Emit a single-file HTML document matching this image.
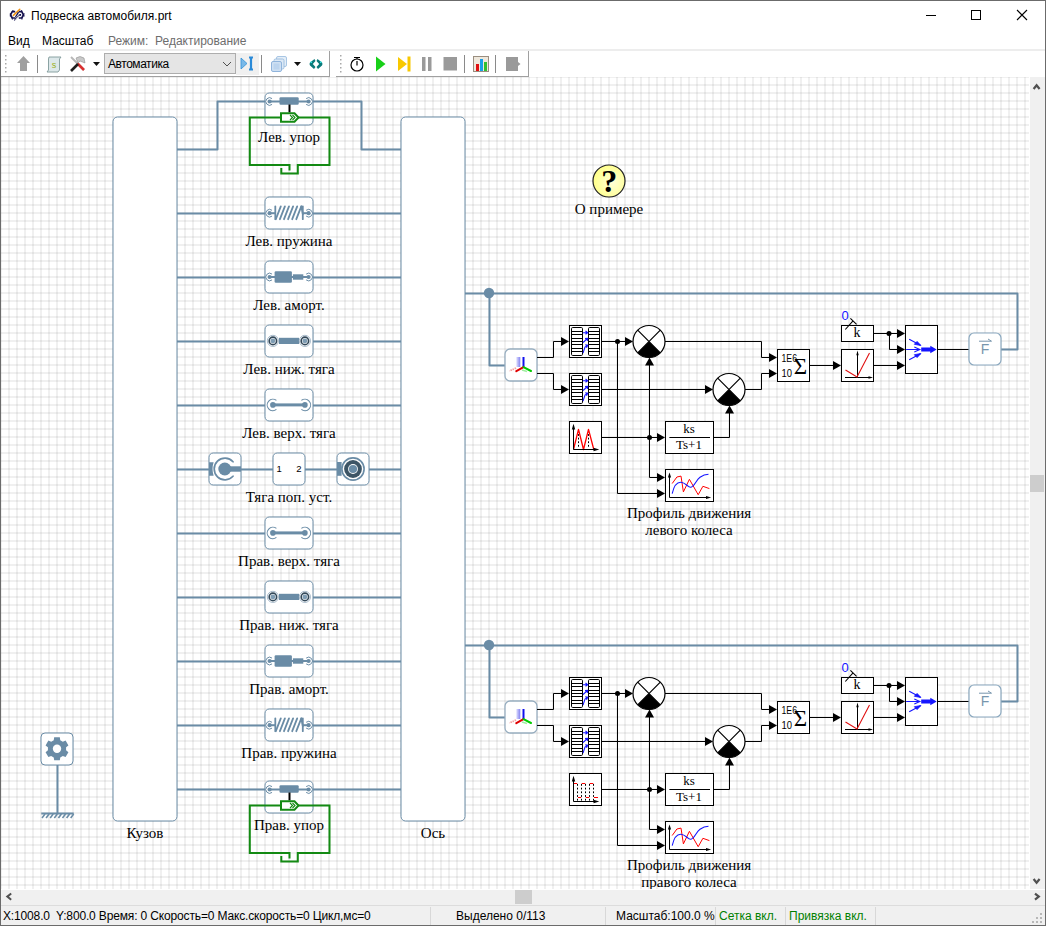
<!DOCTYPE html>
<html><head><meta charset="utf-8">
<style>
html,body{margin:0;padding:0;}
body{width:1046px;height:926px;position:relative;overflow:hidden;background:#fff;font-family:"Liberation Sans",sans-serif;}
.abs{position:absolute;}
#frame{position:absolute;left:0;top:0;width:1044px;height:924px;border:1px solid #6b6b6b;}
.t12{font-size:12px;white-space:nowrap;}
#canvas{position:absolute;left:1px;top:77px;width:1028px;height:812px;overflow:hidden;
 background-color:#fff;
 background-image:linear-gradient(to right, rgba(0,0,0,0.06) 2px, transparent 2px),linear-gradient(to bottom, rgba(0,0,0,0.06) 2px, transparent 2px);
 background-size:8px 8px;background-position:7px 7px;}
#canvas svg{position:absolute;left:-1px;top:-77px;}
</style></head><body>
<!-- title -->
<div class="abs t12" style="left:31px;top:9px;color:#000;">Подвеска автомобиля.prt</div>
<!-- menu -->
<div class="abs t12" style="left:8px;top:34px;">Вид</div>
<div class="abs t12" style="left:42px;top:34px;">Масштаб</div>
<div class="abs t12" style="left:108px;top:34px;color:#6d6d6d;">Режим:&nbsp; Редактирование</div>
<div class="abs" style="left:1px;top:49px;width:1044px;height:2px;background:#ededed;"></div>
<div class="abs" style="left:1px;top:76px;width:329px;height:1px;background:#a0a0a0;"></div>
<div class="abs" style="left:336px;top:76px;width:193px;height:1px;background:#a0a0a0;"></div>
<div class="abs" style="left:329px;top:51px;width:1px;height:26px;background:#a0a0a0;"></div>
<div class="abs" style="left:528px;top:51px;width:1px;height:26px;background:#a0a0a0;"></div>
<div id="canvas"><svg width="1046" height="926" viewBox="0 0 1046 926">
<rect x="113" y="117" width="64" height="704" rx="4.5" fill="#fff" stroke="#6a8ca6" stroke-width="1"/>
<rect x="401" y="117" width="64" height="704" rx="4.5" fill="#fff" stroke="#6a8ca6" stroke-width="1"/>
<text x="145" y="838" font-family="Liberation Serif" font-size="15" text-anchor="middle" fill="#000" >Кузов</text>
<text x="433" y="838" font-family="Liberation Serif" font-size="15" text-anchor="middle" fill="#000" >Ось</text>
<path d="M177,213.5 L265,213.5" fill="none" stroke="#6a8ca6" stroke-width="2" stroke-linejoin="round"/>
<path d="M313,213.5 L401,213.5" fill="none" stroke="#6a8ca6" stroke-width="2" stroke-linejoin="round"/>
<path d="M177,277.5 L265,277.5" fill="none" stroke="#6a8ca6" stroke-width="2" stroke-linejoin="round"/>
<path d="M313,277.5 L401,277.5" fill="none" stroke="#6a8ca6" stroke-width="2" stroke-linejoin="round"/>
<path d="M177,341.5 L265,341.5" fill="none" stroke="#6a8ca6" stroke-width="2" stroke-linejoin="round"/>
<path d="M313,341.5 L401,341.5" fill="none" stroke="#6a8ca6" stroke-width="2" stroke-linejoin="round"/>
<path d="M177,405.5 L265,405.5" fill="none" stroke="#6a8ca6" stroke-width="2" stroke-linejoin="round"/>
<path d="M313,405.5 L401,405.5" fill="none" stroke="#6a8ca6" stroke-width="2" stroke-linejoin="round"/>
<path d="M177,469.5 L401,469.5" fill="none" stroke="#6a8ca6" stroke-width="2" stroke-linejoin="round"/>
<path d="M177,533.5 L265,533.5" fill="none" stroke="#6a8ca6" stroke-width="2" stroke-linejoin="round"/>
<path d="M313,533.5 L401,533.5" fill="none" stroke="#6a8ca6" stroke-width="2" stroke-linejoin="round"/>
<path d="M177,597.5 L265,597.5" fill="none" stroke="#6a8ca6" stroke-width="2" stroke-linejoin="round"/>
<path d="M313,597.5 L401,597.5" fill="none" stroke="#6a8ca6" stroke-width="2" stroke-linejoin="round"/>
<path d="M177,661.5 L265,661.5" fill="none" stroke="#6a8ca6" stroke-width="2" stroke-linejoin="round"/>
<path d="M313,661.5 L401,661.5" fill="none" stroke="#6a8ca6" stroke-width="2" stroke-linejoin="round"/>
<path d="M177,725.5 L265,725.5" fill="none" stroke="#6a8ca6" stroke-width="2" stroke-linejoin="round"/>
<path d="M313,725.5 L401,725.5" fill="none" stroke="#6a8ca6" stroke-width="2" stroke-linejoin="round"/>
<path d="M177,149.5 L217.5,149.5 L217.5,101.5 L265,101.5" fill="none" stroke="#6a8ca6" stroke-width="2" stroke-linejoin="round"/>
<path d="M313,101.5 L361.5,101.5 L361.5,149.5 L401,149.5" fill="none" stroke="#6a8ca6" stroke-width="2" stroke-linejoin="round"/>
<path d="M177,789.5 L265,789.5" fill="none" stroke="#6a8ca6" stroke-width="2" stroke-linejoin="round"/>
<path d="M313,789.5 L401,789.5" fill="none" stroke="#6a8ca6" stroke-width="2" stroke-linejoin="round"/>
<rect x="265" y="93" width="48" height="32" rx="4.2" fill="#fff" stroke="#6a8ca6" stroke-width="1"/>
<line x1="270" y1="101.5" x2="308" y2="101.5" stroke="#6a8ca6" stroke-width="2"/>
<path d="M272.04,98.59 A3.8,3.8 0 1 0 272.04,104.41" fill="none" stroke="#6a8ca6" stroke-width="1"/>
<circle cx="269.6" cy="101.5" r="2.1" fill="#6a8ca6"/>
<path d="M306.16,98.59 A3.8,3.8 0 1 1 306.16,104.41" fill="none" stroke="#6a8ca6" stroke-width="1"/>
<circle cx="308.6" cy="101.5" r="2.1" fill="#6a8ca6"/>
<rect x="279.5" y="97.2" width="19.2" height="7.5" rx="1.2" fill="#6a8ca6"/>
<line x1="289.5" y1="104.5" x2="289.5" y2="112.5" stroke="#000" stroke-width="2"/>
<path d="M281,117.5 L249.8,117.5 L249.8,165.0 L289.5,165.0 L289.5,170.5" fill="none" stroke="#138a13" stroke-width="2"/>
<path d="M281.3,168.0 L281.3,173.5 L297.8,173.5 L297.8,165.0 L329.5,165.0 L329.5,117.5 L298,117.5" fill="none" stroke="#138a13" stroke-width="2"/>
<path d="M281,113.2 L294.5,113.2 L298.5,117.5 L294.5,121.8 L281,121.8 Z" fill="#fff" stroke="#138a13" stroke-width="2"/>
<path d="M290,115.0 L292.5,117.5 L290,120.0 M292.5,115.0 L295,117.5 L292.5,120.0" fill="none" stroke="#138a13" stroke-width="1.1"/>
<text x="289" y="142" font-family="Liberation Serif" font-size="15" text-anchor="middle" fill="#000" >Лев. упор</text>
<rect x="265" y="781" width="48" height="32" rx="4.2" fill="#fff" stroke="#6a8ca6" stroke-width="1"/>
<line x1="270" y1="789.5" x2="308" y2="789.5" stroke="#6a8ca6" stroke-width="2"/>
<path d="M272.04,786.59 A3.8,3.8 0 1 0 272.04,792.41" fill="none" stroke="#6a8ca6" stroke-width="1"/>
<circle cx="269.6" cy="789.5" r="2.1" fill="#6a8ca6"/>
<path d="M306.16,786.59 A3.8,3.8 0 1 1 306.16,792.41" fill="none" stroke="#6a8ca6" stroke-width="1"/>
<circle cx="308.6" cy="789.5" r="2.1" fill="#6a8ca6"/>
<rect x="279.5" y="785.2" width="19.2" height="7.5" rx="1.2" fill="#6a8ca6"/>
<line x1="289.5" y1="792.5" x2="289.5" y2="800.5" stroke="#000" stroke-width="2"/>
<path d="M281,805.5 L249.8,805.5 L249.8,853.0 L289.5,853.0 L289.5,858.5" fill="none" stroke="#138a13" stroke-width="2"/>
<path d="M281.3,856.0 L281.3,861.5 L297.8,861.5 L297.8,853.0 L329.5,853.0 L329.5,805.5 L298,805.5" fill="none" stroke="#138a13" stroke-width="2"/>
<path d="M281,801.2 L294.5,801.2 L298.5,805.5 L294.5,809.8 L281,809.8 Z" fill="#fff" stroke="#138a13" stroke-width="2"/>
<path d="M290,803.0 L292.5,805.5 L290,808.0 M292.5,803.0 L295,805.5 L292.5,808.0" fill="none" stroke="#138a13" stroke-width="1.1"/>
<text x="289" y="830" font-family="Liberation Serif" font-size="15" text-anchor="middle" fill="#000" >Прав. упор</text>
<rect x="265" y="197.0" width="48" height="32" rx="4.2" fill="#fff" stroke="#6a8ca6" stroke-width="1"/>
<line x1="270" y1="213.2" x2="276" y2="213.2" stroke="#6a8ca6" stroke-width="2"/>
<line x1="302" y1="213.2" x2="308" y2="213.2" stroke="#6a8ca6" stroke-width="2"/>
<path d="M272.04,210.29 A3.8,3.8 0 1 0 272.04,216.11" fill="none" stroke="#6a8ca6" stroke-width="1"/>
<circle cx="269.6" cy="213.2" r="2.1" fill="#6a8ca6"/>
<path d="M306.16,210.29 A3.8,3.8 0 1 1 306.16,216.11" fill="none" stroke="#6a8ca6" stroke-width="1"/>
<circle cx="308.6" cy="213.2" r="2.1" fill="#6a8ca6"/>
<line x1="275.3" y1="206.39999999999998" x2="275.3" y2="219.2" stroke="#6a8ca6" stroke-width="1.8" stroke-linecap="round"/>
<line x1="302.8" y1="206.39999999999998" x2="302.8" y2="219.2" stroke="#6a8ca6" stroke-width="1.8" stroke-linecap="round"/>
<line x1="275.8" y1="219.2" x2="280.8" y2="206.39999999999998" stroke="#6a8ca6" stroke-width="1.8" stroke-linecap="round"/>
<line x1="279.90000000000003" y1="219.2" x2="284.90000000000003" y2="206.39999999999998" stroke="#6a8ca6" stroke-width="1.8" stroke-linecap="round"/>
<line x1="284.0" y1="219.2" x2="289.0" y2="206.39999999999998" stroke="#6a8ca6" stroke-width="1.8" stroke-linecap="round"/>
<line x1="288.1" y1="219.2" x2="293.1" y2="206.39999999999998" stroke="#6a8ca6" stroke-width="1.8" stroke-linecap="round"/>
<line x1="292.2" y1="219.2" x2="297.2" y2="206.39999999999998" stroke="#6a8ca6" stroke-width="1.8" stroke-linecap="round"/>
<line x1="296.3" y1="219.2" x2="301.3" y2="206.39999999999998" stroke="#6a8ca6" stroke-width="1.8" stroke-linecap="round"/>
<line x1="301.3" y1="206.39999999999998" x2="302.8" y2="214.2" stroke="#6a8ca6" stroke-width="1.8" stroke-linecap="round"/>
<text x="289" y="245.9" font-family="Liberation Serif" font-size="15" text-anchor="middle" fill="#000" >Лев. пружина</text>
<rect x="265" y="261.0" width="48" height="32" rx="4.2" fill="#fff" stroke="#6a8ca6" stroke-width="1"/>
<line x1="270" y1="277.0" x2="308" y2="277.0" stroke="#6a8ca6" stroke-width="2"/>
<path d="M272.04,274.09 A3.8,3.8 0 1 0 272.04,279.91" fill="none" stroke="#6a8ca6" stroke-width="1"/>
<circle cx="269.6" cy="277.0" r="2.1" fill="#6a8ca6"/>
<path d="M306.16,274.09 A3.8,3.8 0 1 1 306.16,279.91" fill="none" stroke="#6a8ca6" stroke-width="1"/>
<circle cx="308.6" cy="277.0" r="2.1" fill="#6a8ca6"/>
<rect x="274.6" y="271.2" width="17.3" height="11.6" rx="1.3" fill="#6a8ca6"/>
<rect x="292.9" y="274.3" width="10.4" height="5.4" fill="#6a8ca6"/>
<text x="289" y="309.9" font-family="Liberation Serif" font-size="15" text-anchor="middle" fill="#000" >Лев. аморт.</text>
<rect x="265" y="325.0" width="48" height="32" rx="4.2" fill="#fff" stroke="#6a8ca6" stroke-width="1"/>
<rect x="279" y="337.79999999999995" width="20" height="6.2" fill="#6a8ca6"/>
<circle cx="272.9" cy="340.9" r="5.6" fill="#fff" stroke="#9fb4c6" stroke-width="0.9"/>
<circle cx="272.9" cy="340.9" r="3.7" fill="none" stroke="#33495a" stroke-width="1.7"/>
<circle cx="272.9" cy="340.9" r="2.4" fill="#7f9db4"/>
<circle cx="304.9" cy="340.9" r="5.6" fill="#fff" stroke="#9fb4c6" stroke-width="0.9"/>
<circle cx="304.9" cy="340.9" r="3.7" fill="none" stroke="#33495a" stroke-width="1.7"/>
<circle cx="304.9" cy="340.9" r="2.4" fill="#7f9db4"/>
<text x="289" y="373.9" font-family="Liberation Serif" font-size="15" text-anchor="middle" fill="#000" >Лев. ниж. тяга</text>
<rect x="265" y="389.0" width="48" height="32" rx="4.2" fill="#fff" stroke="#6a8ca6" stroke-width="1"/>
<line x1="273" y1="404.9" x2="305" y2="404.9" stroke="#6a8ca6" stroke-width="3"/>
<path d="M276.41,400.41 A5.7,5.7 0 1 0 276.41,409.39" fill="none" stroke="#6a8ca6" stroke-width="1.1"/>
<circle cx="272.9" cy="404.9" r="2.8" fill="#6a8ca6"/>
<path d="M301.39,400.41 A5.7,5.7 0 1 1 301.39,409.39" fill="none" stroke="#6a8ca6" stroke-width="1.1"/>
<circle cx="304.9" cy="404.9" r="2.8" fill="#6a8ca6"/>
<text x="289" y="437.9" font-family="Liberation Serif" font-size="15" text-anchor="middle" fill="#000" >Лев. верх. тяга</text>
<rect x="209" y="453" width="32" height="32" rx="4.2" fill="#fff" stroke="#6a8ca6" stroke-width="1"/>
<rect x="273" y="453" width="32" height="32" rx="4.2" fill="#fff" stroke="#6a8ca6" stroke-width="1"/>
<rect x="337" y="453" width="32" height="32" rx="4.2" fill="#fff" stroke="#6a8ca6" stroke-width="1"/>
<text x="279.2" y="472" font-family="Liberation Sans" font-size="9.5" text-anchor="middle" fill="#000" >1</text>
<text x="299" y="472" font-family="Liberation Sans" font-size="9.5" text-anchor="middle" fill="#000" >2</text>
<path d="M209,462.2 L213.6,462.2 Q211.5,469 213.6,475.8 L209,475.8 Z" fill="#6a8ca6"/>
<path d="M233.03,461.77 A10.8,10.8 0 1 0 233.03,476.23" fill="none" stroke="#6a8ca6" stroke-width="1.7" stroke-linecap="round"/>
<circle cx="224.8" cy="469" r="6.5" fill="#6a8ca6"/>
<rect x="225" y="466.3" width="16" height="5.4" fill="#6a8ca6"/>
<rect x="337" y="462" width="4.6" height="13.8" fill="#6a8ca6"/>
<circle cx="353" cy="469" r="11.1" fill="#fff" stroke="#6a8ca6" stroke-width="1.6"/>
<circle cx="353" cy="469" r="8.9" fill="#3d5566"/>
<circle cx="353" cy="469" r="4.9" fill="#fff"/>
<circle cx="353" cy="469" r="4.1" fill="#6a8ca6"/>
<text x="289" y="502" font-family="Liberation Serif" font-size="15" text-anchor="middle" fill="#000" >Тяга поп. уст.</text>
<rect x="265" y="517.0" width="48" height="32" rx="4.2" fill="#fff" stroke="#6a8ca6" stroke-width="1"/>
<line x1="273" y1="532.9" x2="305" y2="532.9" stroke="#6a8ca6" stroke-width="3"/>
<path d="M276.41,528.41 A5.7,5.7 0 1 0 276.41,537.39" fill="none" stroke="#6a8ca6" stroke-width="1.1"/>
<circle cx="272.9" cy="532.9" r="2.8" fill="#6a8ca6"/>
<path d="M301.39,528.41 A5.7,5.7 0 1 1 301.39,537.39" fill="none" stroke="#6a8ca6" stroke-width="1.1"/>
<circle cx="304.9" cy="532.9" r="2.8" fill="#6a8ca6"/>
<text x="289" y="565.9" font-family="Liberation Serif" font-size="15" text-anchor="middle" fill="#000" >Прав. верх. тяга</text>
<rect x="265" y="581.0" width="48" height="32" rx="4.2" fill="#fff" stroke="#6a8ca6" stroke-width="1"/>
<rect x="279" y="593.8" width="20" height="6.2" fill="#6a8ca6"/>
<circle cx="272.9" cy="596.9" r="5.6" fill="#fff" stroke="#9fb4c6" stroke-width="0.9"/>
<circle cx="272.9" cy="596.9" r="3.7" fill="none" stroke="#33495a" stroke-width="1.7"/>
<circle cx="272.9" cy="596.9" r="2.4" fill="#7f9db4"/>
<circle cx="304.9" cy="596.9" r="5.6" fill="#fff" stroke="#9fb4c6" stroke-width="0.9"/>
<circle cx="304.9" cy="596.9" r="3.7" fill="none" stroke="#33495a" stroke-width="1.7"/>
<circle cx="304.9" cy="596.9" r="2.4" fill="#7f9db4"/>
<text x="289" y="629.9" font-family="Liberation Serif" font-size="15" text-anchor="middle" fill="#000" >Прав. ниж. тяга</text>
<rect x="265" y="645.0" width="48" height="32" rx="4.2" fill="#fff" stroke="#6a8ca6" stroke-width="1"/>
<line x1="270" y1="661.0" x2="308" y2="661.0" stroke="#6a8ca6" stroke-width="2"/>
<path d="M272.04,658.09 A3.8,3.8 0 1 0 272.04,663.91" fill="none" stroke="#6a8ca6" stroke-width="1"/>
<circle cx="269.6" cy="661.0" r="2.1" fill="#6a8ca6"/>
<path d="M306.16,658.09 A3.8,3.8 0 1 1 306.16,663.91" fill="none" stroke="#6a8ca6" stroke-width="1"/>
<circle cx="308.6" cy="661.0" r="2.1" fill="#6a8ca6"/>
<rect x="274.6" y="655.2" width="17.3" height="11.6" rx="1.3" fill="#6a8ca6"/>
<rect x="292.9" y="658.3" width="10.4" height="5.4" fill="#6a8ca6"/>
<text x="289" y="693.9" font-family="Liberation Serif" font-size="15" text-anchor="middle" fill="#000" >Прав. аморт.</text>
<rect x="265" y="709.0" width="48" height="32" rx="4.2" fill="#fff" stroke="#6a8ca6" stroke-width="1"/>
<line x1="270" y1="725.2" x2="276" y2="725.2" stroke="#6a8ca6" stroke-width="2"/>
<line x1="302" y1="725.2" x2="308" y2="725.2" stroke="#6a8ca6" stroke-width="2"/>
<path d="M272.04,722.29 A3.8,3.8 0 1 0 272.04,728.11" fill="none" stroke="#6a8ca6" stroke-width="1"/>
<circle cx="269.6" cy="725.2" r="2.1" fill="#6a8ca6"/>
<path d="M306.16,722.29 A3.8,3.8 0 1 1 306.16,728.11" fill="none" stroke="#6a8ca6" stroke-width="1"/>
<circle cx="308.6" cy="725.2" r="2.1" fill="#6a8ca6"/>
<line x1="275.3" y1="718.4000000000001" x2="275.3" y2="731.2" stroke="#6a8ca6" stroke-width="1.8" stroke-linecap="round"/>
<line x1="302.8" y1="718.4000000000001" x2="302.8" y2="731.2" stroke="#6a8ca6" stroke-width="1.8" stroke-linecap="round"/>
<line x1="275.8" y1="731.2" x2="280.8" y2="718.4000000000001" stroke="#6a8ca6" stroke-width="1.8" stroke-linecap="round"/>
<line x1="279.90000000000003" y1="731.2" x2="284.90000000000003" y2="718.4000000000001" stroke="#6a8ca6" stroke-width="1.8" stroke-linecap="round"/>
<line x1="284.0" y1="731.2" x2="289.0" y2="718.4000000000001" stroke="#6a8ca6" stroke-width="1.8" stroke-linecap="round"/>
<line x1="288.1" y1="731.2" x2="293.1" y2="718.4000000000001" stroke="#6a8ca6" stroke-width="1.8" stroke-linecap="round"/>
<line x1="292.2" y1="731.2" x2="297.2" y2="718.4000000000001" stroke="#6a8ca6" stroke-width="1.8" stroke-linecap="round"/>
<line x1="296.3" y1="731.2" x2="301.3" y2="718.4000000000001" stroke="#6a8ca6" stroke-width="1.8" stroke-linecap="round"/>
<line x1="301.3" y1="718.4000000000001" x2="302.8" y2="726.2" stroke="#6a8ca6" stroke-width="1.8" stroke-linecap="round"/>
<text x="289" y="757.9" font-family="Liberation Serif" font-size="15" text-anchor="middle" fill="#000" >Прав. пружина</text>
<rect x="41" y="733" width="32" height="32" rx="4" fill="#fff" stroke="#6a8ca6" stroke-width="1"/>
<path d="M53.76,740.19 L54.17,737.24 L59.83,737.24 L60.24,740.19 L62.84,741.69 L65.60,740.57 L68.42,745.47 L66.08,747.30 L66.08,750.30 L68.42,752.13 L65.60,757.03 L62.84,755.91 L60.24,757.41 L59.83,760.36 L54.17,760.36 L53.76,757.41 L51.16,755.91 L48.40,757.03 L45.58,752.13 L47.92,750.30 L47.92,747.30 L45.58,745.47 L48.40,740.57 L51.16,741.69 Z" fill="#6a8ca6"/>
<circle cx="57" cy="748.8" r="4.2" fill="#fff"/>
<line x1="57.5" y1="765" x2="57.5" y2="813" stroke="#6a8ca6" stroke-width="2"/>
<line x1="41.3" y1="813.5" x2="73.7" y2="813.5" stroke="#6a8ca6" stroke-width="2"/>
<line x1="42.0" y1="818" x2="45.0" y2="814" stroke="#6a8ca6" stroke-width="1.6"/>
<line x1="46.1" y1="818" x2="49.1" y2="814" stroke="#6a8ca6" stroke-width="1.6"/>
<line x1="50.2" y1="818" x2="53.2" y2="814" stroke="#6a8ca6" stroke-width="1.6"/>
<line x1="54.3" y1="818" x2="57.3" y2="814" stroke="#6a8ca6" stroke-width="1.6"/>
<line x1="58.4" y1="818" x2="61.4" y2="814" stroke="#6a8ca6" stroke-width="1.6"/>
<line x1="62.5" y1="818" x2="65.5" y2="814" stroke="#6a8ca6" stroke-width="1.6"/>
<line x1="66.6" y1="818" x2="69.6" y2="814" stroke="#6a8ca6" stroke-width="1.6"/>
<line x1="70.69999999999999" y1="818" x2="73.69999999999999" y2="814" stroke="#6a8ca6" stroke-width="1.6"/>
<defs><linearGradient id="ghostb" x1="0" y1="0" x2="1" y2="0"><stop offset="0" stop-color="#e0e0ff"/><stop offset="1" stop-color="#8080f0"/></linearGradient><radialGradient id="yg" cx="0.6" cy="0.55" r="0.6"><stop offset="0" stop-color="#ffffd8"/><stop offset="1" stop-color="#ffff88"/></radialGradient></defs>
<circle cx="609" cy="181" r="16" fill="url(#yg)" stroke="#222" stroke-width="1.2"/>
<text x="609.3" y="192" font-family="Liberation Serif" font-size="32" text-anchor="middle" fill="#000" font-weight="bold">?</text>
<text x="609" y="214" font-family="Liberation Serif" font-size="15" text-anchor="middle" fill="#000" >О примере</text>
<path d="M465,293.5 L1017.5,293.5 L1017.5,349.5 L1001,349.5" fill="none" stroke="#6a8ca6" stroke-width="2" stroke-linejoin="round"/>
<circle cx="489" cy="293" r="5.2" fill="#6a8ca6"/>
<path d="M489.5,293.5 L489.5,365.5 L505,365.5" fill="none" stroke="#6a8ca6" stroke-width="2" stroke-linejoin="round"/>
<rect x="505" y="349" width="32" height="32" rx="5" fill="#fff" stroke="#97adbf" stroke-width="1.3"/>
<rect x="516.3" y="357" width="4" height="10" fill="url(#ghostb)"/>
<line x1="523.5" y1="357" x2="523.5" y2="367.2" stroke="#1010ee" stroke-width="2"/>
<line x1="516" y1="368" x2="509.5" y2="371" stroke="#f4a0a0" stroke-width="1.8" stroke-dasharray="1.5,0.8"/>
<line x1="523.5" y1="367.2" x2="516.3" y2="371.2" stroke="#e00000" stroke-width="2" stroke-linecap="round"/>
<line x1="522" y1="370" x2="527" y2="371.5" stroke="#a0eea0" stroke-width="1.6"/>
<line x1="523.5" y1="367.2" x2="531" y2="371" stroke="#00cc00" stroke-width="2" stroke-linecap="round"/>
<path d="M537,357.5 L553.5,357.5 L553.5,341.5 L562,341.5" fill="none" stroke="#000" stroke-width="1"/>
<path d="M561,337.0 L569,341.5 L561,346.0 Z" fill="#000"/>
<path d="M537,373.5 L553.5,373.5 L553.5,389.5 L562,389.5" fill="none" stroke="#000" stroke-width="1"/>
<path d="M561,385.0 L569,389.5 L561,394.0 Z" fill="#000"/>
<rect x="569.5" y="325.5" width="32" height="32" fill="#fff" stroke="#000" stroke-width="1"/>
<rect x="571.5" y="327.5" width="11" height="28" rx="1.2" fill="#fff" stroke="#000" stroke-width="1"/>
<path d="M571.5,331.5 L582.5,331.5 M571.5,334.5 L582.5,334.5 M571.5,338.5 L582.5,338.5 M571.5,341.5 L582.5,341.5 M571.5,344.5 L582.5,344.5 M571.5,348.5 L582.5,348.5 M571.5,351.5 L582.5,351.5" stroke="#000" stroke-width="1"/>
<rect x="588.5" y="327.5" width="11" height="28" rx="1.2" fill="#fff" stroke="#000" stroke-width="1"/>
<path d="M588.5,331.5 L599.5,331.5 M588.5,334.5 L599.5,334.5 M588.5,338.5 L599.5,338.5 M588.5,341.5 L599.5,341.5 M588.5,344.5 L599.5,344.5 M588.5,348.5 L599.5,348.5 M588.5,351.5 L599.5,351.5" stroke="#000" stroke-width="1"/>
<path d="M583,332.7 L587.5,332.7 M585.5,331 L587.7,332.7 L585.5,334.2 M583,342.5 L587.7,338.4 M585,338.6 L587.7,338.4 L587.3,341 M583,353.2 L585,347 L587.7,345.2 M585.2,344.8 L587.7,345.2 L586.5,347.8" stroke="#1515ff" stroke-width="1.1" fill="none"/>
<rect x="569.5" y="373.5" width="32" height="32" fill="#fff" stroke="#000" stroke-width="1"/>
<rect x="571.5" y="375.5" width="11" height="28" rx="1.2" fill="#fff" stroke="#000" stroke-width="1"/>
<path d="M571.5,379.5 L582.5,379.5 M571.5,382.5 L582.5,382.5 M571.5,386.5 L582.5,386.5 M571.5,389.5 L582.5,389.5 M571.5,392.5 L582.5,392.5 M571.5,396.5 L582.5,396.5 M571.5,399.5 L582.5,399.5" stroke="#000" stroke-width="1"/>
<rect x="588.5" y="375.5" width="11" height="28" rx="1.2" fill="#fff" stroke="#000" stroke-width="1"/>
<path d="M588.5,379.5 L599.5,379.5 M588.5,382.5 L599.5,382.5 M588.5,386.5 L599.5,386.5 M588.5,389.5 L599.5,389.5 M588.5,392.5 L599.5,392.5 M588.5,396.5 L599.5,396.5 M588.5,399.5 L599.5,399.5" stroke="#000" stroke-width="1"/>
<path d="M583,380.7 L587.5,380.7 M585.5,379 L587.7,380.7 L585.5,382.2 M583,390.5 L587.7,386.4 M585,386.6 L587.7,386.4 L587.3,389 M583,401.2 L585,395 L587.7,393.2 M585.2,392.8 L587.7,393.2 L586.5,395.8" stroke="#1515ff" stroke-width="1.1" fill="none"/>
<path d="M601,341.5 L626,341.5" fill="none" stroke="#000" stroke-width="1"/>
<path d="M625,337.0 L633,341.5 L625,346.0 Z" fill="#000"/>
<circle cx="617.5" cy="341.5" r="2.5" fill="#000"/>
<path d="M617.5,341.5 L617.5,493.5 L658,493.5" fill="none" stroke="#000" stroke-width="1"/>
<path d="M657,489.0 L665,493.5 L657,498.0 Z" fill="#000"/>
<path d="M601,389.5 L706,389.5" fill="none" stroke="#000" stroke-width="1"/>
<path d="M705,385.0 L713,389.5 L705,394.0 Z" fill="#000"/>
<circle cx="649" cy="341.5" r="16" fill="#fff" stroke="#000" stroke-width="1.2"/>
<path d="M649,341.5 L637.6864,352.8136 A16,16 0 0 0 660.3136,352.8136 Z" fill="#000"/>
<path d="M637.6864,330.1864 L660.3136,352.8136 M660.3136,330.1864 L637.6864,352.8136" stroke="#000" stroke-width="1.2"/>
<circle cx="729" cy="389.5" r="16" fill="#fff" stroke="#000" stroke-width="1.2"/>
<path d="M729,389.5 L717.6864,400.8136 A16,16 0 0 0 740.3136,400.8136 Z" fill="#000"/>
<path d="M717.6864,378.1864 L740.3136,400.8136 M740.3136,378.1864 L717.6864,400.8136" stroke="#000" stroke-width="1.2"/>
<rect x="569.5" y="421.5" width="32" height="32" fill="#fff" stroke="#000" stroke-width="1"/>
<path d="M578.5,430.5 L578.5,448 M588.5,430.5 L588.5,448" stroke="#000" stroke-width="1" stroke-dasharray="1.8,1.8" fill="none"/>
<path d="M573.5,449.5 L578.5,429.3 L583.5,449.5 L588.5,429.3 L593.8,449.5" stroke="#ff0000" stroke-width="1.3" fill="none" stroke-linejoin="round"/>
<path d="M573.5,428 L573.5,449.5 L595,449.5" stroke="#000" stroke-width="1" fill="none"/>
<path d="M571.8,429.5 L573.5,423.8 L575.2,429.5 Z" fill="#000"/>
<path d="M593.5,447.8 L599.3,449.5 L593.5,451.2 Z" fill="#000"/>
<path d="M601,437.5 L658,437.5" fill="none" stroke="#000" stroke-width="1"/>
<path d="M657,433.0 L665,437.5 L657,442.0 Z" fill="#000"/>
<circle cx="649.5" cy="437.5" r="2.5" fill="#000"/>
<path d="M649.5,365 L649.5,477.5 L658,477.5" fill="none" stroke="#000" stroke-width="1"/>
<path d="M657,473.0 L665,477.5 L657,482.0 Z" fill="#000"/>
<path d="M645.0,365.5 L649.5,357.5 L654.0,365.5 Z" fill="#000"/>
<rect x="665.5" y="421.5" width="48" height="32" fill="#fff" stroke="#000" stroke-width="1"/>
<line x1="669.4" y1="437.5" x2="710" y2="437.5" stroke="#000" stroke-width="1"/>
<text x="689" y="432.9" font-family="Liberation Serif" font-size="13" text-anchor="middle" fill="#000" >ks</text>
<text x="689" y="448.7" font-family="Liberation Serif" font-size="13" text-anchor="middle" fill="#000" >Ts+1</text>
<path d="M713,437.5 L729.5,437.5 L729.5,413" fill="none" stroke="#000" stroke-width="1"/>
<path d="M725.0,413.5 L729.5,405.5 L734.0,413.5 Z" fill="#000"/>
<rect x="665.5" y="469.5" width="48" height="32" fill="#fff" stroke="#000" stroke-width="1"/>
<path d="M669.5,475 L669.5,497.5 L708,497.5" stroke="#000" stroke-width="1" fill="none"/>
<path d="M667.9,477.5 L669.5,472.5 L671.1,477.5 Z" fill="#000"/>
<path d="M706,495.9 L711.2,497.5 L706,499.1 Z" fill="#000"/>
<path d="M672.2,483.5 L676.9,477 L681,476.1 L683.4,491.9 L689.4,479.3 L698.2,494.7 L702.9,486.3 L709.4,488.6" stroke="#ff0000" stroke-width="1" fill="none"/>
<path d="M672.2,493.7 C674,485 677,482 681,482.2 C686,482.5 688,488 691,487.2 C695,486 696,480 700,477.2 C703,475 706,474.2 708.5,474.2" stroke="#1515ff" stroke-width="1.1" fill="none"/>
<text x="689" y="517.9" font-family="Liberation Serif" font-size="15" text-anchor="middle" fill="#000" >Профиль движения</text>
<path d="M665,341.5 L761.5,341.5 L761.5,357.5 L770,357.5" fill="none" stroke="#000" stroke-width="1"/>
<path d="M769,353.0 L777,357.5 L769,362.0 Z" fill="#000"/>
<path d="M745,389.5 L761.5,389.5 L761.5,373.5 L770,373.5" fill="none" stroke="#000" stroke-width="1"/>
<path d="M769,369.0 L777,373.5 L769,378.0 Z" fill="#000"/>
<rect x="777.5" y="349.5" width="32" height="32" fill="#fff" stroke="#000" stroke-width="1"/>
<text x="781.5" y="361.5" font-family="Liberation Sans" font-size="10" text-anchor="start" fill="#000" textLength="15.5" lengthAdjust="spacingAndGlyphs">1E6</text>
<text x="781.5" y="377.2" font-family="Liberation Sans" font-size="10" text-anchor="start" fill="#000" textLength="10.5" lengthAdjust="spacingAndGlyphs">10</text>
<text x="800.5" y="373.8" font-family="Liberation Serif" font-size="23" text-anchor="middle" fill="#000" >Σ</text>
<path d="M809,365.5 L834,365.5" fill="none" stroke="#000" stroke-width="1"/>
<path d="M833,361.0 L841,365.5 L833,370.0 Z" fill="#000"/>
<rect x="841.5" y="349.5" width="32" height="32" fill="#fff" stroke="#000" stroke-width="1"/>
<path d="M857.5,353 L857.5,377.5 M845,377.5 L870,377.5" stroke="#000" stroke-width="1" fill="none"/>
<path d="M856.3,355.2 L857.5,350.6 L858.7,355.2 Z M868.5,376.3 L873,377.5 L868.5,378.7 Z" fill="#000"/>
<path d="M845.5,370 L857,377 L869.5,353" stroke="#e01010" stroke-width="1.1" fill="none"/>
<path d="M873,365.5 L898,365.5" fill="none" stroke="#000" stroke-width="1"/>
<path d="M897,361.0 L905,365.5 L897,370.0 Z" fill="#000"/>
<rect x="841.5" y="325.5" width="32" height="16" fill="#fff" stroke="#000" stroke-width="1"/>
<text x="857" y="337" font-family="Liberation Serif" font-size="14" text-anchor="middle" fill="#000" >k</text>
<path d="M845.3,329.5 L852.8,321.2 M850.4,318.3 L856.6,324.4" stroke="#000" stroke-width="1.1" fill="none"/>
<text x="845" y="320" font-family="Liberation Sans" font-size="13" text-anchor="middle" fill="#1515ff" >0</text>
<path d="M873,333.5 L898,333.5" fill="none" stroke="#000" stroke-width="1"/>
<path d="M897,329.0 L905,333.5 L897,338.0 Z" fill="#000"/>
<circle cx="889" cy="333.5" r="2.5" fill="#000"/>
<path d="M889.5,333.5 L889.5,349.5 L898,349.5" fill="none" stroke="#000" stroke-width="1"/>
<path d="M897,345.0 L905,349.5 L897,354.0 Z" fill="#000"/>
<rect x="905.5" y="325.5" width="32" height="48" fill="#fff" stroke="#000" stroke-width="1"/>
<path d="M909.2,339.2 L920.5,345.3 M906.1,349.5 L919.5,349.5 M909.2,359.8 L920.5,353.7" stroke="#1515ff" stroke-width="1.1" fill="none"/>
<path d="M920.9,345.5 L914.3,344.3 L917.1,341.4 Z M920.9,353.5 L914.3,354.7 L917.1,357.6 Z" fill="#1515ff" stroke="#1515ff" stroke-width="0.8"/>
<path d="M914.3,347.1 L919.8,349.5 L914.3,351.9" stroke="#1515ff" stroke-width="1.1" fill="none"/>
<path d="M921.2,347.5 L930.3,347.5 L930.3,345.8 L936.7,349.5 L930.3,353.2 L930.3,351.5 L921.2,351.5 Z" fill="#1515ff"/>
<path d="M937,349.5 L969,349.5" fill="none" stroke="#000" stroke-width="1"/>
<rect x="969" y="333" width="32" height="32" rx="5" fill="#fff" stroke="#8aa8bf" stroke-width="1.2"/>
<text x="985" y="353.8" font-family="Liberation Sans" font-size="14" text-anchor="middle" fill="#7896ad" >F</text>
<path d="M979,341.2 L991.5,341.2 L988,339" stroke="#7896ad" stroke-width="1" fill="none"/>
<text x="689" y="535" font-family="Liberation Serif" font-size="15" text-anchor="middle" fill="#000" >левого колеса</text>
<path d="M465,645.5 L1017.5,645.5 L1017.5,701.5 L1001,701.5" fill="none" stroke="#6a8ca6" stroke-width="2" stroke-linejoin="round"/>
<circle cx="489" cy="645" r="5.2" fill="#6a8ca6"/>
<path d="M489.5,645.5 L489.5,717.5 L505,717.5" fill="none" stroke="#6a8ca6" stroke-width="2" stroke-linejoin="round"/>
<rect x="505" y="701" width="32" height="32" rx="5" fill="#fff" stroke="#97adbf" stroke-width="1.3"/>
<rect x="516.3" y="709" width="4" height="10" fill="url(#ghostb)"/>
<line x1="523.5" y1="709" x2="523.5" y2="719.2" stroke="#1010ee" stroke-width="2"/>
<line x1="516" y1="720" x2="509.5" y2="723" stroke="#f4a0a0" stroke-width="1.8" stroke-dasharray="1.5,0.8"/>
<line x1="523.5" y1="719.2" x2="516.3" y2="723.2" stroke="#e00000" stroke-width="2" stroke-linecap="round"/>
<line x1="522" y1="722" x2="527" y2="723.5" stroke="#a0eea0" stroke-width="1.6"/>
<line x1="523.5" y1="719.2" x2="531" y2="723" stroke="#00cc00" stroke-width="2" stroke-linecap="round"/>
<path d="M537,709.5 L553.5,709.5 L553.5,693.5 L562,693.5" fill="none" stroke="#000" stroke-width="1"/>
<path d="M561,689.0 L569,693.5 L561,698.0 Z" fill="#000"/>
<path d="M537,725.5 L553.5,725.5 L553.5,741.5 L562,741.5" fill="none" stroke="#000" stroke-width="1"/>
<path d="M561,737.0 L569,741.5 L561,746.0 Z" fill="#000"/>
<rect x="569.5" y="677.5" width="32" height="32" fill="#fff" stroke="#000" stroke-width="1"/>
<rect x="571.5" y="679.5" width="11" height="28" rx="1.2" fill="#fff" stroke="#000" stroke-width="1"/>
<path d="M571.5,683.5 L582.5,683.5 M571.5,686.5 L582.5,686.5 M571.5,690.5 L582.5,690.5 M571.5,693.5 L582.5,693.5 M571.5,696.5 L582.5,696.5 M571.5,700.5 L582.5,700.5 M571.5,703.5 L582.5,703.5" stroke="#000" stroke-width="1"/>
<rect x="588.5" y="679.5" width="11" height="28" rx="1.2" fill="#fff" stroke="#000" stroke-width="1"/>
<path d="M588.5,683.5 L599.5,683.5 M588.5,686.5 L599.5,686.5 M588.5,690.5 L599.5,690.5 M588.5,693.5 L599.5,693.5 M588.5,696.5 L599.5,696.5 M588.5,700.5 L599.5,700.5 M588.5,703.5 L599.5,703.5" stroke="#000" stroke-width="1"/>
<path d="M583,684.7 L587.5,684.7 M585.5,683 L587.7,684.7 L585.5,686.2 M583,694.5 L587.7,690.4 M585,690.6 L587.7,690.4 L587.3,693 M583,705.2 L585,699 L587.7,697.2 M585.2,696.8 L587.7,697.2 L586.5,699.8" stroke="#1515ff" stroke-width="1.1" fill="none"/>
<rect x="569.5" y="725.5" width="32" height="32" fill="#fff" stroke="#000" stroke-width="1"/>
<rect x="571.5" y="727.5" width="11" height="28" rx="1.2" fill="#fff" stroke="#000" stroke-width="1"/>
<path d="M571.5,731.5 L582.5,731.5 M571.5,734.5 L582.5,734.5 M571.5,738.5 L582.5,738.5 M571.5,741.5 L582.5,741.5 M571.5,744.5 L582.5,744.5 M571.5,748.5 L582.5,748.5 M571.5,751.5 L582.5,751.5" stroke="#000" stroke-width="1"/>
<rect x="588.5" y="727.5" width="11" height="28" rx="1.2" fill="#fff" stroke="#000" stroke-width="1"/>
<path d="M588.5,731.5 L599.5,731.5 M588.5,734.5 L599.5,734.5 M588.5,738.5 L599.5,738.5 M588.5,741.5 L599.5,741.5 M588.5,744.5 L599.5,744.5 M588.5,748.5 L599.5,748.5 M588.5,751.5 L599.5,751.5" stroke="#000" stroke-width="1"/>
<path d="M583,732.7 L587.5,732.7 M585.5,731 L587.7,732.7 L585.5,734.2 M583,742.5 L587.7,738.4 M585,738.6 L587.7,738.4 L587.3,741 M583,753.2 L585,747 L587.7,745.2 M585.2,744.8 L587.7,745.2 L586.5,747.8" stroke="#1515ff" stroke-width="1.1" fill="none"/>
<path d="M601,693.5 L626,693.5" fill="none" stroke="#000" stroke-width="1"/>
<path d="M625,689.0 L633,693.5 L625,698.0 Z" fill="#000"/>
<circle cx="617.5" cy="693.5" r="2.5" fill="#000"/>
<path d="M617.5,693.5 L617.5,845.5 L658,845.5" fill="none" stroke="#000" stroke-width="1"/>
<path d="M657,841.0 L665,845.5 L657,850.0 Z" fill="#000"/>
<path d="M601,741.5 L706,741.5" fill="none" stroke="#000" stroke-width="1"/>
<path d="M705,737.0 L713,741.5 L705,746.0 Z" fill="#000"/>
<circle cx="649" cy="693.5" r="16" fill="#fff" stroke="#000" stroke-width="1.2"/>
<path d="M649,693.5 L637.6864,704.8136 A16,16 0 0 0 660.3136,704.8136 Z" fill="#000"/>
<path d="M637.6864,682.1864 L660.3136,704.8136 M660.3136,682.1864 L637.6864,704.8136" stroke="#000" stroke-width="1.2"/>
<circle cx="729" cy="741.5" r="16" fill="#fff" stroke="#000" stroke-width="1.2"/>
<path d="M729,741.5 L717.6864,752.8136 A16,16 0 0 0 740.3136,752.8136 Z" fill="#000"/>
<path d="M717.6864,730.1864 L740.3136,752.8136 M740.3136,730.1864 L717.6864,752.8136" stroke="#000" stroke-width="1.2"/>
<rect x="569.5" y="773.5" width="32" height="32" fill="#fff" stroke="#000" stroke-width="1"/>
<path d="M577.5,784 L577.5,802 M581.5,784 L581.5,802 M585.5,784 L585.5,802 M589.5,784 L589.5,802 M593.5,784 L593.5,802" stroke="#000" stroke-width="1" stroke-dasharray="1.8,1.9" fill="none"/>
<path d="M573.5,783.5 L577.2,783.5 M581.7,783.5 L585.3,783.5 M589.7,783.5 L593.3,783.5 M578,797.5 L581.2,797.5 M585.8,797.5 L589.2,797.5 M594,797.5 L598,797.5" stroke="#ff0000" stroke-width="1" fill="none"/>
<path d="M573.5,780 L573.5,801.5 L595,801.5" stroke="#000" stroke-width="1" fill="none"/>
<path d="M571.8,781.5 L573.5,775.8 L575.2,781.5 Z" fill="#000"/>
<path d="M593.5,799.8 L599.3,801.5 L593.5,803.2 Z" fill="#000"/>
<path d="M601,789.5 L658,789.5" fill="none" stroke="#000" stroke-width="1"/>
<path d="M657,785.0 L665,789.5 L657,794.0 Z" fill="#000"/>
<circle cx="649.5" cy="789.5" r="2.5" fill="#000"/>
<path d="M649.5,717 L649.5,829.5 L658,829.5" fill="none" stroke="#000" stroke-width="1"/>
<path d="M657,825.0 L665,829.5 L657,834.0 Z" fill="#000"/>
<path d="M645.0,717.5 L649.5,709.5 L654.0,717.5 Z" fill="#000"/>
<rect x="665.5" y="773.5" width="48" height="32" fill="#fff" stroke="#000" stroke-width="1"/>
<line x1="669.4" y1="789.5" x2="710" y2="789.5" stroke="#000" stroke-width="1"/>
<text x="689" y="784.9" font-family="Liberation Serif" font-size="13" text-anchor="middle" fill="#000" >ks</text>
<text x="689" y="800.7" font-family="Liberation Serif" font-size="13" text-anchor="middle" fill="#000" >Ts+1</text>
<path d="M713,789.5 L729.5,789.5 L729.5,765" fill="none" stroke="#000" stroke-width="1"/>
<path d="M725.0,765.5 L729.5,757.5 L734.0,765.5 Z" fill="#000"/>
<rect x="665.5" y="821.5" width="48" height="32" fill="#fff" stroke="#000" stroke-width="1"/>
<path d="M669.5,827 L669.5,849.5 L708,849.5" stroke="#000" stroke-width="1" fill="none"/>
<path d="M667.9,829.5 L669.5,824.5 L671.1,829.5 Z" fill="#000"/>
<path d="M706,847.9 L711.2,849.5 L706,851.1 Z" fill="#000"/>
<path d="M672.2,835.5 L676.9,829 L681,828.1 L683.4,843.9 L689.4,831.3 L698.2,846.7 L702.9,838.3 L709.4,840.6" stroke="#ff0000" stroke-width="1" fill="none"/>
<path d="M672.2,845.7 C674,837 677,834 681,834.2 C686,834.5 688,840 691,839.2 C695,838 696,832 700,829.2 C703,827 706,826.2 708.5,826.2" stroke="#1515ff" stroke-width="1.1" fill="none"/>
<text x="689" y="869.9" font-family="Liberation Serif" font-size="15" text-anchor="middle" fill="#000" >Профиль движения</text>
<path d="M665,693.5 L761.5,693.5 L761.5,709.5 L770,709.5" fill="none" stroke="#000" stroke-width="1"/>
<path d="M769,705.0 L777,709.5 L769,714.0 Z" fill="#000"/>
<path d="M745,741.5 L761.5,741.5 L761.5,725.5 L770,725.5" fill="none" stroke="#000" stroke-width="1"/>
<path d="M769,721.0 L777,725.5 L769,730.0 Z" fill="#000"/>
<rect x="777.5" y="701.5" width="32" height="32" fill="#fff" stroke="#000" stroke-width="1"/>
<text x="781.5" y="713.5" font-family="Liberation Sans" font-size="10" text-anchor="start" fill="#000" textLength="15.5" lengthAdjust="spacingAndGlyphs">1E6</text>
<text x="781.5" y="729.2" font-family="Liberation Sans" font-size="10" text-anchor="start" fill="#000" textLength="10.5" lengthAdjust="spacingAndGlyphs">10</text>
<text x="800.5" y="725.8" font-family="Liberation Serif" font-size="23" text-anchor="middle" fill="#000" >Σ</text>
<path d="M809,717.5 L834,717.5" fill="none" stroke="#000" stroke-width="1"/>
<path d="M833,713.0 L841,717.5 L833,722.0 Z" fill="#000"/>
<rect x="841.5" y="701.5" width="32" height="32" fill="#fff" stroke="#000" stroke-width="1"/>
<path d="M857.5,705 L857.5,729.5 M845,729.5 L870,729.5" stroke="#000" stroke-width="1" fill="none"/>
<path d="M856.3,707.2 L857.5,702.6 L858.7,707.2 Z M868.5,728.3 L873,729.5 L868.5,730.7 Z" fill="#000"/>
<path d="M845.5,722 L857,729 L869.5,705" stroke="#e01010" stroke-width="1.1" fill="none"/>
<path d="M873,717.5 L898,717.5" fill="none" stroke="#000" stroke-width="1"/>
<path d="M897,713.0 L905,717.5 L897,722.0 Z" fill="#000"/>
<rect x="841.5" y="677.5" width="32" height="16" fill="#fff" stroke="#000" stroke-width="1"/>
<text x="857" y="689" font-family="Liberation Serif" font-size="14" text-anchor="middle" fill="#000" >k</text>
<path d="M845.3,681.5 L852.8,673.2 M850.4,670.3 L856.6,676.4" stroke="#000" stroke-width="1.1" fill="none"/>
<text x="845" y="672" font-family="Liberation Sans" font-size="13" text-anchor="middle" fill="#1515ff" >0</text>
<path d="M873,685.5 L898,685.5" fill="none" stroke="#000" stroke-width="1"/>
<path d="M897,681.0 L905,685.5 L897,690.0 Z" fill="#000"/>
<circle cx="889" cy="685.5" r="2.5" fill="#000"/>
<path d="M889.5,685.5 L889.5,701.5 L898,701.5" fill="none" stroke="#000" stroke-width="1"/>
<path d="M897,697.0 L905,701.5 L897,706.0 Z" fill="#000"/>
<rect x="905.5" y="677.5" width="32" height="48" fill="#fff" stroke="#000" stroke-width="1"/>
<path d="M909.2,691.2 L920.5,697.3 M906.1,701.5 L919.5,701.5 M909.2,711.8 L920.5,705.7" stroke="#1515ff" stroke-width="1.1" fill="none"/>
<path d="M920.9,697.5 L914.3,696.3 L917.1,693.4 Z M920.9,705.5 L914.3,706.7 L917.1,709.6 Z" fill="#1515ff" stroke="#1515ff" stroke-width="0.8"/>
<path d="M914.3,699.1 L919.8,701.5 L914.3,703.9" stroke="#1515ff" stroke-width="1.1" fill="none"/>
<path d="M921.2,699.5 L930.3,699.5 L930.3,697.8 L936.7,701.5 L930.3,705.2 L930.3,703.5 L921.2,703.5 Z" fill="#1515ff"/>
<path d="M937,701.5 L969,701.5" fill="none" stroke="#000" stroke-width="1"/>
<rect x="969" y="685" width="32" height="32" rx="5" fill="#fff" stroke="#8aa8bf" stroke-width="1.2"/>
<text x="985" y="705.8" font-family="Liberation Sans" font-size="14" text-anchor="middle" fill="#7896ad" >F</text>
<path d="M979,693.2 L991.5,693.2 L988,691" stroke="#7896ad" stroke-width="1" fill="none"/>
<text x="689" y="887" font-family="Liberation Serif" font-size="15" text-anchor="middle" fill="#000" >правого колеса</text>
</svg></div>
<!-- scrollbars -->
<div class="abs" style="left:1030px;top:77px;width:15px;height:812px;background:#f0f0f0;"></div>
<div class="abs" style="left:1030px;top:475px;width:14px;height:17px;background:#cdcdcd;"></div>
<div class="abs" style="left:1px;top:890px;width:1044px;height:15px;background:#f0f0f0;"></div>
<div class="abs" style="left:515px;top:890px;width:17px;height:14px;background:#cdcdcd;"></div>
<!-- status bar -->
<div class="abs" style="left:1px;top:905px;width:1044px;height:20px;background:#f0f0f0;border-top:1px solid #dcdcdc;"></div>
<div class="abs t12" style="left:3px;top:909px;letter-spacing:-0.15px;">X:1008.0&nbsp; Y:800.0 Время: 0 Скорость=0 Макс.скорость=0 Цикл,мс=0</div>
<div class="abs t12" style="left:456px;top:909px;">Выделено 0/113</div>

<svg class="abs" style="left:0;top:0;" width="1046" height="926" viewBox="0 0 1046 926">
<!-- title icon -->
<g>
<path d="M15.2,11.6 L12.2,11.6 L10.6,14.8 L12.2,18 L15.6,18" fill="none" stroke="#14104e" stroke-width="1.7" stroke-linejoin="round"/>
<path d="M18.6,11.6 L21.8,11.6 L23.4,14.8 L21.8,18 L18.8,18" fill="none" stroke="#14104e" stroke-width="1.7" stroke-linejoin="round"/>
<g fill="#14104e"><rect x="12.3" y="10.2" width="1.2" height="1.2"/><rect x="9.8" y="13.3" width="1.2" height="1.2"/><rect x="9.8" y="15.3" width="1.2" height="1.2"/><rect x="11.8" y="18.3" width="1.2" height="1.2"/><rect x="21" y="10.2" width="1.2" height="1.2"/><rect x="23.4" y="13.3" width="1.2" height="1.2"/><rect x="23.4" y="15.3" width="1.2" height="1.2"/><rect x="21.3" y="18.3" width="1.2" height="1.2"/><rect x="19.3" y="14" width="1.8" height="1.8"/></g>
<line x1="13.4" y1="15.4" x2="19.8" y2="9.3" stroke="#f39210" stroke-width="1.5" stroke-linecap="round"/>
<line x1="14.2" y1="20.4" x2="19.5" y2="14.8" stroke="#14104e" stroke-width="1.3" stroke-dasharray="1,0.6"/>
<line x1="15.5" y1="17" x2="18.5" y2="12.2" stroke="#14104e" stroke-width="1.3"/>
</g>
<!-- window buttons -->
<line x1="926" y1="15.5" x2="936" y2="15.5" stroke="#000" stroke-width="1"/>
<rect x="971.5" y="10.5" width="9" height="9" fill="none" stroke="#000" stroke-width="1"/>
<path d="M1017,10 L1027,20 M1027,10 L1017,20" stroke="#000" stroke-width="1.1"/>
<!-- toolbar 1 -->

<g fill="#a8a8a8">
<rect x="5" y="55" width="1.5" height="1.5"/><rect x="5" y="59" width="1.5" height="1.5"/><rect x="5" y="63" width="1.5" height="1.5"/><rect x="5" y="67" width="1.5" height="1.5"/><rect x="5" y="71" width="1.5" height="1.5"/>
<rect x="340" y="55" width="1.5" height="1.5"/><rect x="340" y="59" width="1.5" height="1.5"/><rect x="340" y="63" width="1.5" height="1.5"/><rect x="340" y="67" width="1.5" height="1.5"/><rect x="340" y="71" width="1.5" height="1.5"/>
</g>
<path d="M23.5,56 L30,63 L27,63 L27,71 L20,71 L20,63 L17,63 Z" fill="#a0a0a0"/>
<line x1="37.5" y1="55" x2="37.5" y2="73" stroke="#8a8a8a"/>
<!-- script icon -->
<path d="M49,57 L61,57 L59.5,59 L59.5,70 L58,72 L47,72 L48.5,70 L48.5,59 Z" fill="#dde8ea" stroke="#7f9a9a" stroke-width="0.9"/>
<text x="54" y="68" font-family="Liberation Sans" font-size="9" fill="#9ab020" text-anchor="middle">s</text>
<!-- tools icon -->
<line x1="71" y1="57" x2="84" y2="70" stroke="#b8b8b8" stroke-width="2"/>
<line x1="77.5" y1="63.5" x2="84" y2="70" stroke="#d83030" stroke-width="2.6"/>
<line x1="71" y1="71" x2="78" y2="64" stroke="#202020" stroke-width="2.6"/>
<path d="M76,58 Q80,55 84,58 L85,63 L80,61 L78,63 Z" fill="#c8c8c8" stroke="#909090" stroke-width="0.6"/>
<path d="M93,62 L100,62 L96.5,66 Z" fill="#111"/>
<!-- combobox -->
<rect x="104.5" y="53.5" width="131" height="20" fill="#e5e5e5" stroke="#adadad"/>
<path d="M223,62 L227,66 L231,62" fill="none" stroke="#505050" stroke-width="1"/>
<rect x="236" y="53" width="23" height="22" fill="#f0f0f0"/>
<path d="M241,58 L247,63.5 L241,69 Z" fill="#78b8e8" stroke="#3090d8" stroke-width="0.8"/>
<path d="M249,57.5 L253,57.5 M251,57.5 L251,69.5 M249,69.5 L253,69.5" stroke="#2a8ad8" stroke-width="2.2"/>
<line x1="261.5" y1="55" x2="261.5" y2="73" stroke="#8a8a8a"/>
<!-- layers -->
<rect x="276.5" y="56.5" width="10" height="10" rx="1.5" fill="#e4eef8" stroke="#a8c6e4"/>
<rect x="274" y="59" width="10" height="10" rx="1.5" fill="#dce9f6" stroke="#a0c0e0"/>
<rect x="271.5" y="61.5" width="10" height="10" rx="1.5" fill="#cfe0f2" stroke="#90b4dc"/>
<rect x="273.5" y="63.5" width="6" height="6" fill="#bcd4ee"/>
<path d="M294,62 L301,62 L297.5,66 Z" fill="#111"/>
<!-- teal arrows -->
<path d="M314.5,59 L310,62.5 Q309,64 310,65.5 L314,69 L315.5,67 L312.8,64 L315.5,61 Z" fill="#0b7a7a"/>
<path d="M317.5,59 L322,62.5 Q323,64 322,65.5 L318,69 L316.5,67 L319.2,64 L316.5,61 Z" fill="#0b7a7a"/>
<rect x="320" y="61.5" width="1.5" height="1.5" fill="#30e0e0"/><rect x="310.5" y="61.5" width="1.5" height="1.5" fill="#30e0e0"/>
<!-- toolbar 2 -->
<circle cx="357" cy="65" r="6" fill="none" stroke="#000" stroke-width="1.2"/>
<path d="M354,57.5 L360,57.5 M357,57.5 L357,59 M357,61 L357,65.5" stroke="#000" stroke-width="1.2"/>
<path d="M376,56.5 L385.5,64 L376,71.5 Z" fill="#18d018"/>
<path d="M398,57 L407,64 L398,71 Z" fill="#f8c800"/>
<rect x="407.5" y="56.5" width="3" height="15" fill="#f8c800"/>
<rect x="422" y="57" width="3.5" height="14" fill="#9a9a9a"/>
<rect x="428" y="57" width="3.5" height="14" fill="#9a9a9a"/>
<rect x="443.5" y="57" width="13.5" height="13.5" fill="#9a9a9a"/>
<line x1="464.5" y1="55" x2="464.5" y2="73" stroke="#8a8a8a"/>
<rect x="473.5" y="56.5" width="15" height="15" fill="#efe8dc" stroke="#9a8e80"/>
<rect x="476" y="64" width="3" height="7" fill="#e01010"/>
<rect x="480" y="59" width="3" height="12" fill="#18a0e8"/>
<rect x="484" y="62" width="3" height="9" fill="#30c030"/>
<line x1="495.5" y1="55" x2="495.5" y2="73" stroke="#8a8a8a"/>
<path d="M506,57 L518,57 L518,62 L520.5,64 L518,66 L518,71 L506,71 Z" fill="#9a9a9a"/>
<!-- vscroll arrows -->
<path d="M1033.6,89 L1036.6,85.2 L1039.6,89" fill="none" stroke="#505050" stroke-width="2.2"/>
<path d="M1033.6,879 L1036.6,882.8 L1039.6,879" fill="none" stroke="#505050" stroke-width="2.2"/>
<path d="M11.2,893.5 L7.3,896.6 L11.2,899.7" fill="none" stroke="#505050" stroke-width="2"/>
<path d="M1035,893.6 L1038.8,896.6 L1035,899.6" fill="none" stroke="#505050" stroke-width="2.2"/>
<!-- status separators -->
<line x1="430.5" y1="907" x2="430.5" y2="925" stroke="#d8d8d8"/>
<line x1="605.5" y1="907" x2="605.5" y2="925" stroke="#d8d8d8"/>
<line x1="715.5" y1="907" x2="715.5" y2="925" stroke="#d8d8d8"/>
<line x1="785.5" y1="907" x2="785.5" y2="925" stroke="#d8d8d8"/>
<line x1="875.5" y1="907" x2="875.5" y2="925" stroke="#d8d8d8"/>
<g fill="#b8b8b8"><rect x="1040" y="921" width="2" height="2"/><rect x="1036" y="921" width="2" height="2"/><rect x="1032" y="921" width="2" height="2"/><rect x="1040" y="917" width="2" height="2"/><rect x="1036" y="917" width="2" height="2"/><rect x="1040" y="913" width="2" height="2"/></g>
</svg>

<div class="abs t12" style="left:108px;top:57px;letter-spacing:-0.45px;">Автоматика</div>
<div class="abs t12" style="left:616px;top:909px;">Масштаб:100.0 %</div>
<div class="abs t12" style="left:719px;top:909px;color:#008000;">Сетка вкл.</div>
<div class="abs t12" style="left:789px;top:909px;color:#008000;">Привязка вкл.</div>
<div id="frame"></div>
</body></html>
